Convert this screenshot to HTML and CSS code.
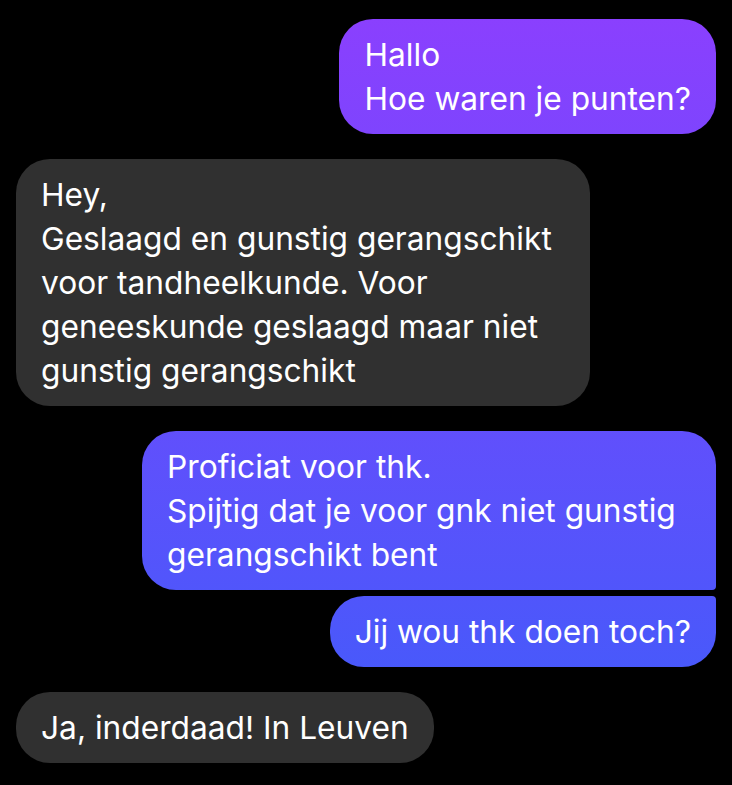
FILE: index.html
```html
<!DOCTYPE html>
<html lang="nl">
<head>
<meta charset="utf-8">
<title>Chat</title>
<link rel="stylesheet" href="styles.css">
</head>
<body>
<main class="chat">
  <div class="msg out">Hallo
Hoe waren je punten?</div>
  <div class="msg in">Hey,
Geslaagd en gunstig gerangschikt voor tandheelkunde. Voor geneeskunde geslaagd maar niet gunstig gerangschikt</div>
  <div class="group">
    <div class="msg out first">Proficiat voor thk.
Spijtig dat je voor gnk niet gunstig gerangschikt bent</div>
    <div class="msg out last">Jij wou thk doen toch?</div>
  </div>
  <div class="msg in">Ja, inderdaad! In Leuven</div>
</main>
</body>
</html>
```

FILE: styles.css
```css
html, body {
  margin: 0;
  padding: 0;
  background: #000;
}
body {
  width: 732px;
  height: 785px;
  overflow: hidden;
  font-family: Inter, "Noto Sans", sans-serif;
}
.chat {
  display: flex;
  flex-direction: column;
  gap: 25px;
  padding: 19px 16px 0 16px;
}
.group {
  display: flex;
  flex-direction: column;
  align-items: flex-end;
  gap: 6px;
}
.msg {
  box-sizing: border-box;
  max-width: 574px;
  padding: 14px 25px 13px;
  font-size: 31.7px;
  line-height: 44px;
  color: #fff;
  white-space: pre-line;
  border-radius: 34px;
}
.out {
  align-self: flex-end;
  background: linear-gradient(180deg, #8c3ffe 0px, #3d5dfa 785px);
  background-attachment: fixed;
}
.in {
  align-self: flex-start;
  background: #303030;
}
.out.first {
  border-bottom-right-radius: 4px;
}
.out.last {
  border-top-right-radius: 4px;
}
```
